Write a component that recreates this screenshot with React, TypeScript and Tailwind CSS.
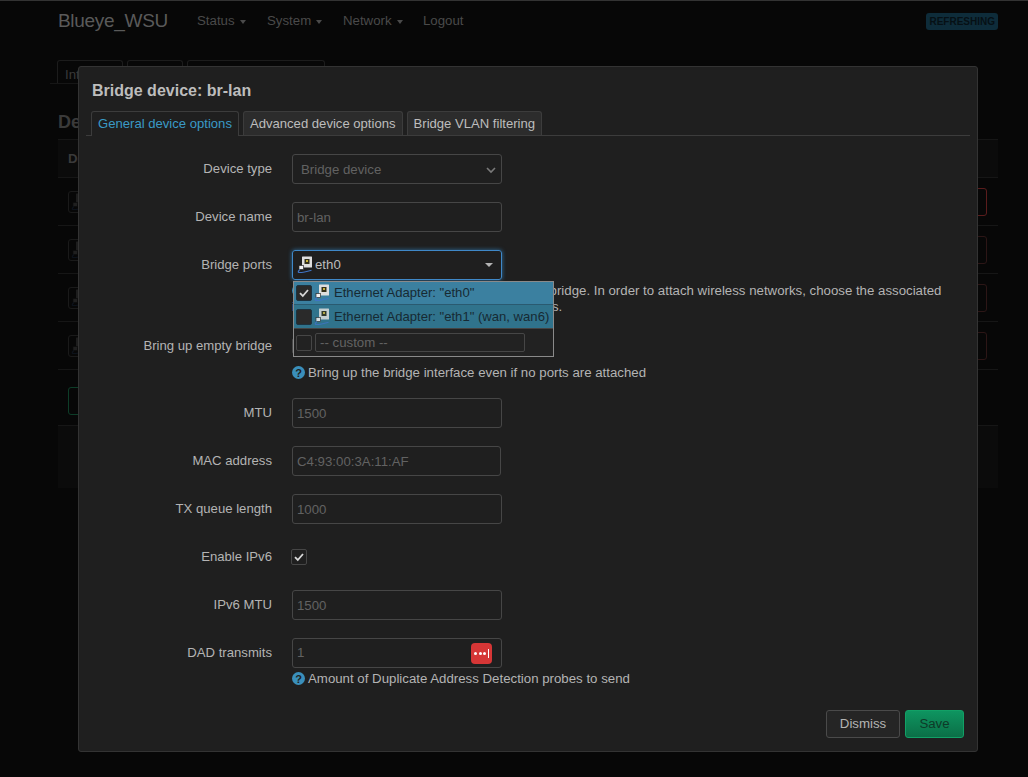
import type { ReactNode } from "react";

const EthIcon = ({ dim }: { dim?: boolean }) => (
  <svg width="16" height="18" viewBox="0 0 16 18" className="shrink-0" style={{ opacity: dim ? 0.85 : 1 }}>
    <rect x="5" y="0.5" width="10" height="11" rx="0.5" fill="#dedede" />
    <rect x="7.5" y="3" width="5" height="5" fill="#33301a" />
    <rect x="9" y="4" width="2" height="2" fill="#c9b23c" />
    <rect x="2" y="9.5" width="4.5" height="4" fill="#f2f2f2" stroke="#2a2a2a" strokeWidth="0.7" />
    <path d="M3 13.5 C1 15 0.5 16.5 2.5 16.5 C6 16.5 10 15.5 14.5 14.2" fill="none" stroke="#3f74c4" strokeWidth="1.1" />
  </svg>
);

const Check = () => (
  <svg width="12" height="12" viewBox="0 0 12 12" fill="none">
    <path d="M2 6.2 L4.8 9 L10 3" stroke="#d8d8d8" strokeWidth="1.8" />
  </svg>
);

const Caret = () => (
  <span className="inline-block ml-[5px] align-middle border-x-[3.5px] border-t-[4px] border-x-transparent border-t-[#4a4a4a]" />
);

const Row = ({ label, children, desc, descClass = "mt-[2px]" }: { label: string; children: ReactNode; desc?: ReactNode; descClass?: string }) => (
  <div className="flex mb-[18px]">
    <div className="w-[186px] h-[30px] flex items-center justify-end text-[#b4b4b4] text-[13.15px]">{label}</div>
    <div className="ml-[20px] flex-1">
      {children}
      {desc && <div className={`${descClass} leading-[16px] text-[#b4b4b4]`}>{desc}</div>}
    </div>
  </div>
);

const Field = ({ value, w = "w-[210px]" }: { value: string; w?: string }) => (
  <input
    readOnly
    value={value}
    className={`${w} h-[30px] block px-[4px] rounded-[3px] border border-[#464646] bg-transparent text-[#626262] text-[13.25px] outline-none`}
  />
);

const Help = () => (
  <span className="inline-flex w-[13px] h-[13px] mt-[1px] mr-[3px] rounded-full bg-[#3a8fbb] text-[#1f1f1f] text-[11px] font-bold items-center justify-center align-top">?</span>
);

const Box = ({ checked, dark }: { checked?: boolean; dark?: boolean }) => (
  <span className={`w-[16px] h-[16px] shrink-0 rounded-[2px] border flex items-center justify-center ${dark ? "border-[#1d3340] bg-[#2a2a2a]" : "border-[#464646]"}`}>
    {checked && <Check />}
  </span>
);

const DeviceRow = ({ strong }: { strong?: boolean }) => (
  <div className="h-[48px] border-b border-[#161616] flex items-center justify-between pl-[10px] pr-[11px]">
    <span className="w-[40px] h-[22px] pl-[2px] flex items-center rounded-[3px] border border-[#1a1a1a]">
      <span className="opacity-10">
        <EthIcon />
      </span>
    </span>
    <span className={`w-[60px] h-[28px] rounded-[3px] border ${strong ? "border-[#5a1c1c]" : "border-[#2c1616]"}`} />
  </div>
);

export default function App() {
  return (
    <div className="relative w-[1028px] h-[777px] overflow-hidden bg-[#070707] border-t border-[#333] text-[13.25px] font-['Liberation_Sans',Arial,sans-serif]">
      <header className="h-[40px] pl-[58px] pr-[30px] flex items-center text-[#4a4a4a]">
        <span className="text-[19px] font-light text-[#5a5a5a] w-[139px] tracking-[-0.3px]">Blueye_WSU</span>
        <span className="w-[70px]">Status<Caret /></span>
        <span className="w-[76px]">System<Caret /></span>
        <span className="w-[80px]">Network<Caret /></span>
        <span>Logout</span>
        <span className="ml-auto px-[3px] h-[17px] flex items-center rounded-[3px] bg-[#0e2c3a] text-[#061015] text-[10px] font-bold">REFRESHING</span>
      </header>

      <main className="pt-[19px] px-[50px] text-[#3a3a3a]">
        <div className="flex gap-[4px] pl-[7px] h-[24px] border-b border-[#161616]">
          <span className="w-[66px] pl-[7px] pt-[4px] border border-b-0 border-[#1c1c1c] rounded-t-[3px]">Interfaces</span>
          <span className="w-[56px] pl-[6px] pt-[4px] border border-b-0 border-[#1c1c1c] rounded-t-[3px]">Devices</span>
          <span className="w-[138px] pl-[6px] pt-[4px] border border-b-0 border-[#1c1c1c] rounded-t-[3px]">Global network options</span>
        </div>
        <h2 className="mt-[26px] ml-[8px] text-[18px] leading-[24px] font-bold text-[#3a3a3a]">Devices</h2>
        <div className="mt-[5px] ml-[8px] mr-[-20px] border-t border-[#161616]">
          <div className="h-[38px] pl-[10px] flex items-center font-bold bg-[#0b0b0b] border-b border-[#161616]">Device</div>
          <DeviceRow strong />
          <DeviceRow />
          <DeviceRow />
          <DeviceRow />
        </div>
        <div className="mt-[17px] ml-[18px] w-[60px] h-[28px] rounded-[3px] border border-[#0d3d28]" />
        <div className="mt-[10px] ml-[8px] mr-[-20px] h-[63px] bg-[#0b0b0b] border-t border-[#161616]" />
      </main>

      <section className="absolute left-[78px] top-[65px] w-[900px] h-[686px] bg-[#1f1f1f] border border-[#333] rounded-[3px] px-[7px]">
        <h3 className="mt-[14px] ml-[6px] text-[16px] leading-[20px] font-bold text-[#bdbdbd]">Bridge device: br-lan</h3>
        <div className="mt-[10px] h-[25px] pl-[5px] flex gap-[4px] border-b border-[#3c3c3c] text-[13.1px]">
          <span className="h-[25px] px-[6px] flex items-center rounded-t-[3px] border border-b-0 border-[#3c3c3c] bg-[#1f1f1f] text-[#3a9ac6]">General device options</span>
          <span className="h-[24px] px-[6px] flex items-center rounded-t-[3px] border border-b-0 border-[#3c3c3c] bg-[#2c2c2c] text-[#bdbdbd]">Advanced device options</span>
          <span className="h-[24px] px-[6px] flex items-center rounded-t-[3px] border border-b-0 border-[#3c3c3c] bg-[#2c2c2c] text-[#bdbdbd]">Bridge VLAN filtering</span>
        </div>

        <div className="mt-[18px]">
          <Row label="Device type">
            <div className="w-[210px] h-[30px] pl-[8px] pr-[5px] pt-px flex items-center justify-between rounded-[3px] border border-[#464646] text-[#626262]">
              Bridge device
              <svg width="10" height="10" viewBox="0 0 10 10" fill="none">
                <path d="M1 3 L5 7 L9 3" stroke="#7a7a7a" strokeWidth="1.6" />
              </svg>
            </div>
          </Row>
          <Row label="Device name">
            <Field value="br-lan" />
          </Row>
          <Row
            label="Bridge ports"
            descClass="mt-[3px] h-[30px]"
            desc={
              <div className="w-[660px]">
                <Help />
                Specifies the wired ports to attach to this bridge. In order to attach wireless networks, choose the associated interface as a network in the wireless settings.
              </div>
            }
          >
            <div className="relative w-[210px]">
              <div className="h-[30px] pl-[4px] pr-[8px] flex items-center gap-[2px] rounded-[3px] border border-[#3f88c8] shadow-[0_0_4px_#2f6f9f] text-[#bdbdbd]">
                <EthIcon />
                eth0
                <span className="ml-auto border-x-[4px] border-t-[4px] border-x-transparent border-t-[#b4b4b4]" />
              </div>
              <div className="absolute left-[1px] top-[31px] w-[261px] h-[76px] border border-[#8a8a8a] bg-[#222] text-[#172a33] text-[13.1px]">
                <div className="h-[23px] pl-[2px] flex items-center gap-[2px] bg-[#3b80a0] border-b border-[#2a5a70]">
                  <Box checked dark />
                  <EthIcon />
                  <span className="ml-[2px]">Ethernet Adapter: "eth0"</span>
                </div>
                <div className="h-[24px] pl-[2px] flex items-center gap-[2px] bg-[#30738c] border-b border-[#444]">
                  <Box dark />
                  <EthIcon dim />
                  <span className="ml-[2px]">Ethernet Adapter: "eth1" (wan, wan6)</span>
                </div>
                <div className="h-[27px] pl-[2px] flex items-center gap-[3px]">
                  <Box />
                  <input
                    readOnly
                    placeholder="-- custom --"
                    className="w-[210px] h-[19px] px-[4px] rounded-[2px] border border-[#464646] bg-transparent text-[13.25px] placeholder:text-[#626262] outline-none"
                  />
                </div>
              </div>
            </div>
          </Row>
          <Row
            label="Bring up empty bridge"
            descClass="mt-[4px] h-[15px]"
            desc={
              <>
                <Help />
                Bring up the bridge interface even if no ports are attached
              </>
            }
          >
            <div className="h-[30px] flex items-center">
              <Box />
            </div>
          </Row>
          <Row label="MTU">
            <Field value="1500" />
          </Row>
          <Row label="MAC address">
            <Field value="C4:93:00:3A:11:AF" w="w-[209px]" />
          </Row>
          <Row label="TX queue length">
            <Field value="1000" />
          </Row>
          <Row label="Enable IPv6">
            <div className="h-[30px] flex items-center -ml-px">
              <Box checked />
            </div>
          </Row>
          <Row label="IPv6 MTU">
            <Field value="1500" />
          </Row>
          <Row
            label="DAD transmits"
            descClass="mt-[3px] h-[15px]"
            desc={
              <>
                <Help />
                Amount of Duplicate Address Detection probes to send
              </>
            }
          >
            <div className="w-[210px] h-[30px] pl-[4px] pr-[9px] flex items-center justify-between rounded-[3px] border border-[#464646] text-[#626262]">
              1
              <span className="w-[21px] h-[21px] rounded-[4px] bg-[#d63636] flex items-center justify-center gap-[1.5px]">
                <span className="w-[3px] h-[3px] rounded-full bg-white" />
                <span className="w-[3px] h-[3px] rounded-full bg-white" />
                <span className="w-[3px] h-[3px] rounded-full bg-white" />
                <span className="w-px h-[9px] bg-white" />
              </span>
            </div>
          </Row>
        </div>

        <div className="mt-[24px] mr-[6px] flex justify-end gap-[5px]">
          <button className="w-[74px] h-[28px] rounded-[3px] border border-[#4a4a4a] bg-[#252525] text-[#b4b4b4]">Dismiss</button>
          <button className="w-[59px] h-[28px] rounded-[3px] border border-[#12a066] bg-gradient-to-b from-[#0e9560] to-[#0b6f47] text-[#0e3a28]">Save</button>
        </div>
      </section>
    </div>
  );
}
